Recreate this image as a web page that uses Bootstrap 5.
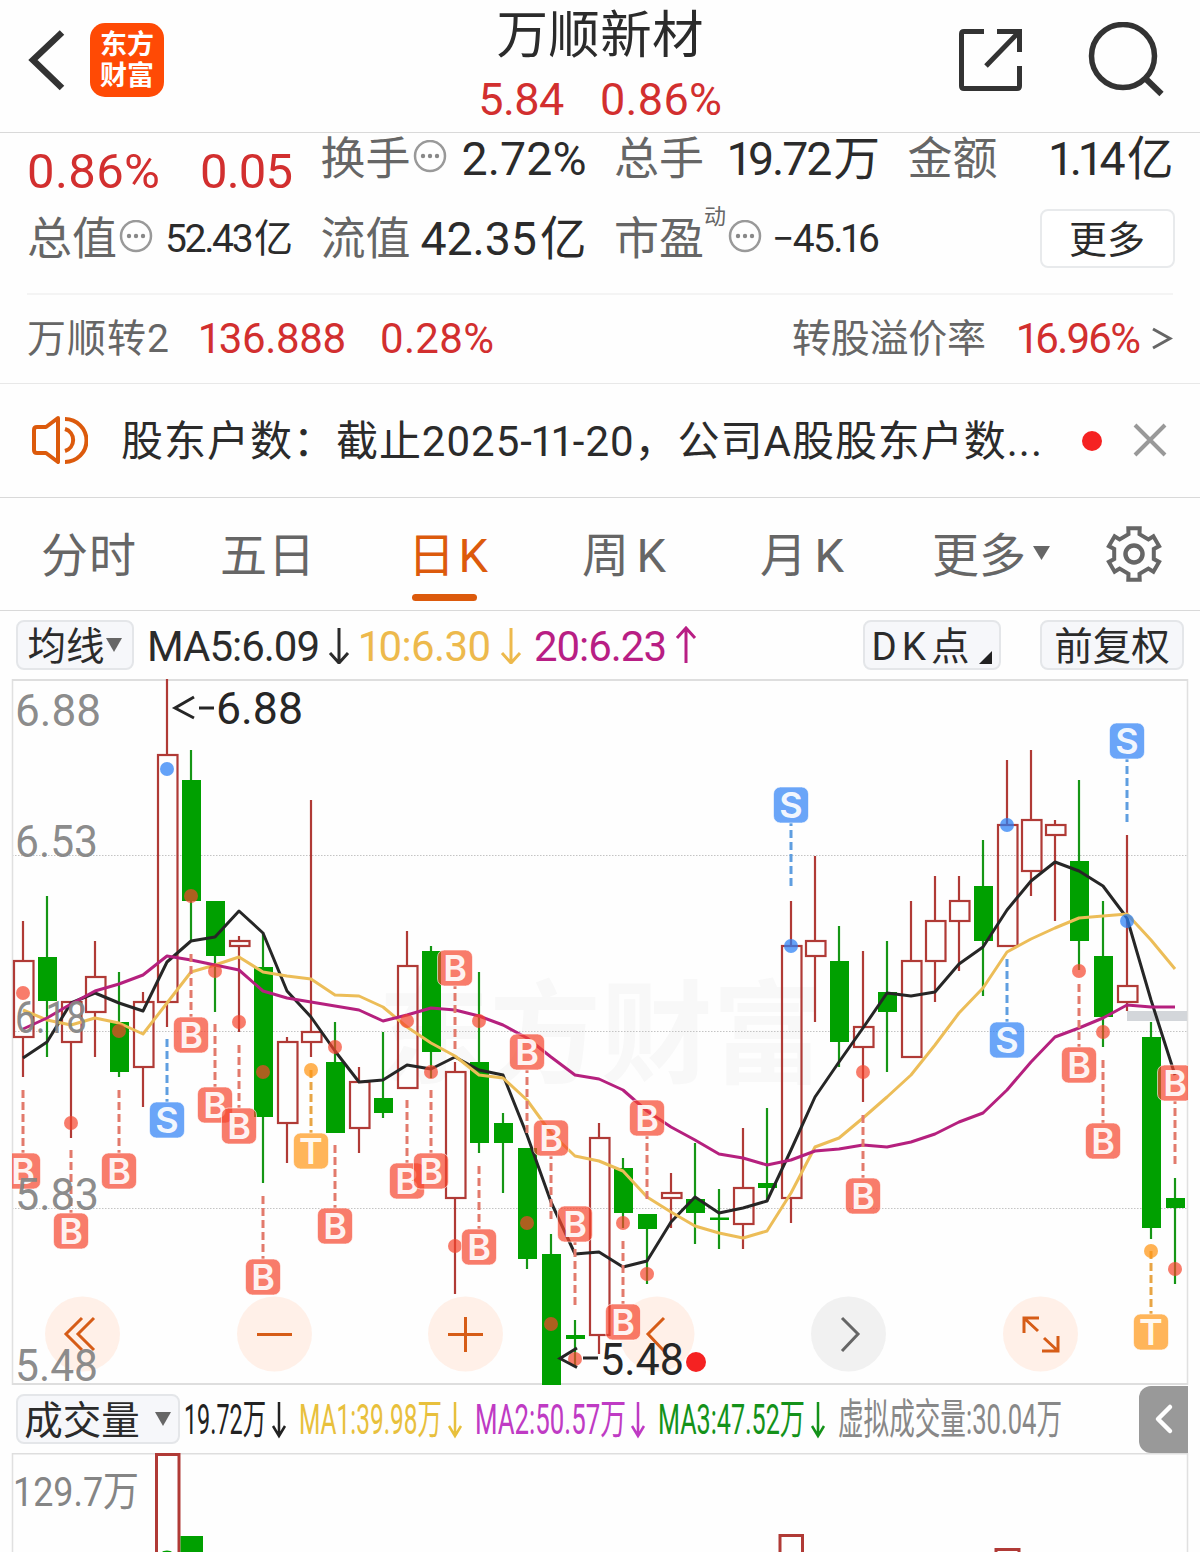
<!DOCTYPE html>
<html lang="zh-CN">
<head>
<meta charset="utf-8">
<meta name="viewport" content="width=device-width, initial-scale=1">
<title>万顺新材 日K</title>
<link rel="stylesheet" href="https://cdn.jsdelivr.net/npm/bootstrap@5.3.0/dist/css/bootstrap.min.css">
<style>
:root{--ink:#2b2b2b;--muted-ink:#666;--up:#d22f2f;--accent:#dc5a0c;--rule:#d9d9d9}
body{font-family:Roboto,"Noto Sans CJK SC",sans-serif;color:var(--ink);background:#fefefe;width:1200px;height:1552px;overflow:hidden;line-height:1}
svg{display:block;flex:none}
.up-ink{color:var(--up)}
.dim{color:var(--muted-ink)}
.fit{display:inline-block;white-space:nowrap;flex:none}
.one{margin:0 -.055em}
.unit{margin-left:.07em}
.top-bar{height:133px;border-bottom:1px solid var(--rule);padding:0 36px 0 26px}
.side-box{width:230px}
.title-box{margin-left:10px}
.app-logo{width:74px;height:74px;border-radius:15px;background:#ff4a05;color:#fff;font-size:27px;line-height:31px;font-weight:700;padding-top:7px;margin-left:24px}
.stock-name{font-size:51.5px;line-height:60px;margin-top:6px}
.stock-quote{font-size:45px;line-height:50px;margin-top:9px;gap:36px}
.stats{display:grid;grid-template-columns:repeat(4,266px);column-gap:27.5px;grid-template-rows:50px 110px;padding:0 27px;height:160px}
.stat-label{font-size:45px;padding-top:2px}
.stat-value{font-size:46.5px;padding-top:2px}
.stat-value-sm{font-size:39px;padding-top:3px}
.big-pct{font-size:49px;padding-top:14px}
.second-row{align-items:center;height:110px}
.tiny-sup{font-size:22px;align-self:flex-start;padding-top:23px}
.more-btn{width:135px;height:59px;border:2px solid #e8eaec;border-radius:8px;background:#fff;font-size:38px;color:var(--ink);padding:3px 0 0;line-height:1;margin-right:-1px}
.bond-row{height:90px;margin:0 27px;border-top:2px solid #f4f4f4;font-size:39px}
.bond-val{font-size:42px}
.bond-price{margin-left:31px}
.bond-rate{margin-left:34px}
.premium{margin-left:32px}
.notice{height:115px;border-top:1px solid #e8e8e8;border-bottom:1px solid var(--rule);font-size:42px;padding:0 31px 0 32px}
.notice-text{margin:3px 40px 0 33px}
.red-dot{width:20px;height:20px;border-radius:50%;background:#f52222}
.k-tabs{display:grid;grid-template-columns:179px 188px 174px 178px 172px 174px 56px;height:113px;border-bottom:1px solid var(--rule);font-size:47px;color:var(--muted-ink);padding-left:41px}
.k-tab{height:112px;display:flex;align-items:center;position:relative}
.k-tab .fit{padding-top:3px}
.k-tab.on{color:var(--accent)}
.k-tab.on::after{content:"";position:absolute;left:4px;bottom:9px;width:65px;height:7px;border-radius:4px;background:var(--accent)}
.ma-bar{height:68px;padding:0 16px;font-size:42px}
.ma-bar>.fit{padding-top:4px}
.chip{height:50px;border:2px solid #e4e6e9;border-radius:8px;background:#f6f7fa;font-size:38.5px;display:flex;align-items:center;justify-content:center;flex:none}
.chip>span{padding-top:4px}
.vol-bar{height:68px;padding-left:16px}
.drawer{width:49px;height:67px;border-radius:12px 0 0 12px;background:#999;margin-right:12px}
svg text{white-space:pre}
</style>
</head>
<body>
<header class="top-bar d-flex justify-content-between">
  <div class="side-box d-flex align-items-center" style="height:120px">
    <svg width="40" height="64" viewBox="26 28 40 64" fill="none" stroke="#333" stroke-width="6.5"><path d="M62 32.500 33 60l29 28"/></svg>
    <div class="app-logo text-center">东方<br>财富</div>
  </div>
  <div class="title-box text-center">
    <div class="stock-name"><span class="fit" data-w="207">万顺新材</span></div>
    <div class="stock-quote d-flex justify-content-center up-ink"><span class="fit" data-w="86">5.84</span><span class="fit" data-w="122">0.86%</span></div>
  </div>
  <div class="side-box d-flex justify-content-end align-items-center" style="height:120px">
    <svg width="206" height="76" viewBox="958 22 206 76" fill="none" stroke="#333" stroke-width="5"><path d="M984 31.500H964q-2.500 0-2.500 2.500V86q0 2.500 2.500 2.500h53q2.500 0 2.500-2.500V66M997 31.500h22.500V52M1019 32 986 66"/><circle cx="1123" cy="56" r="31.500" stroke-width="5.500"/><path d="m1146 79 15.500 15" stroke-width="6"/></svg>
  </div>
</header>

<section class="stats">
  <div class="d-flex justify-content-between up-ink big-pct" style="height:50px"><span class="fit" data-w="133">0.86%</span><span class="fit" data-w="93">0.05</span></div>
  <div class="d-flex align-items-center"><span class="stat-label dim">换手</span><svg class="dots me-auto" width="36" height="36"></svg><span class="fit stat-value" data-w="125">2.72%</span></div>
  <div class="d-flex align-items-center justify-content-between"><span class="stat-label dim">总手</span><span class="fit stat-value" data-w="151">19.72万</span></div>
  <div class="d-flex align-items-center justify-content-between"><span class="stat-label dim">金额</span><span class="fit stat-value" data-w="123">1.14亿</span></div>
  <div class="d-flex second-row"><span class="stat-label dim">总值</span><svg class="dots me-auto" width="36" height="36"></svg><span class="fit stat-value-sm" data-w="128">52.43亿</span></div>
  <div class="d-flex second-row justify-content-between"><span class="stat-label dim">流值</span><span class="fit stat-value" data-w="166">42.35亿</span></div>
  <div class="d-flex second-row"><span class="stat-label dim">市盈</span><span class="tiny-sup dim">动</span><svg class="dots me-auto" width="36" height="36"></svg><span class="fit stat-value-sm" data-w="108">−45.16</span></div>
  <div class="d-flex second-row justify-content-end"><button class="more-btn">更多</button></div>
</section>

<section class="bond-row d-flex align-items-center">
  <span class="fit dim" data-w="142">万顺转2</span>
  <span class="fit up-ink bond-val bond-price" data-w="146">136.888</span>
  <span class="fit up-ink bond-val bond-rate" data-w="114">0.28%</span>
  <span class="fit dim ms-auto" data-w="194">转股溢价率</span>
  <span class="fit up-ink bond-val premium" data-w="123">16.96%</span>
  <svg class="ms-2" width="24" height="28" fill="none" stroke="#666" stroke-width="3"><path d="m4 4 17 9.500L4 23"/></svg>
</section>

<section class="notice d-flex align-items-center">
  <svg width="56" height="50" viewBox="0 1 56 50" fill="none" stroke="#dc5a0c" stroke-width="4" stroke-linejoin="round"><path d="M26 3 14 12H5q-3 0-3 3v20q0 3 3 3h9l12 9ZM33 14a11.500 11.500 0 0 1 0 22M33 4a21 21 0 0 1 0 43"/></svg>
  <span class="fit notice-text" data-w="921">股东户数：截止2025-11-20，公司A股股东户数...</span>
  <span class="red-dot"></span>
  <svg class="ms-auto" width="38" height="38" stroke="#999" stroke-width="4"><path d="m4 3 30 30M34 3 4 33"/></svg>
</section>

<nav class="k-tabs">
  <span class="k-tab"><span class="fit" data-w="95">分时</span></span>
  <span class="k-tab"><span class="fit" data-w="95">五日</span></span>
  <span class="k-tab on"><span class="fit" data-w="80">日K</span></span>
  <span class="k-tab"><span class="fit" data-w="84">周K</span></span>
  <span class="k-tab"><span class="fit" data-w="84">月K</span></span>
  <span class="k-tab"><span class="fit" data-w="94">更多</span><svg width="26" height="20"><path d="M7 2h17l-8.500 14Z" fill="#666"/></svg></span>
  <span class="k-tab"><svg width="56" height="56" viewBox="-28 -28 56 56" fill="none" stroke="#666" stroke-width="4"><path id="gear"/><circle r="8.500" stroke-width="4.500"/></svg></span>
</nav>

<section class="ma-bar d-flex align-items-center">
  <div class="chip" style="width:118px"><span>均线</span><svg width="18" height="16"><path d="M1 1h16L9 15Z" fill="#666"/></svg></div>
  <span class="fit" data-w="173" style="margin-left:13px">MA5:6.09</span>
  <svg width="26" height="38" style="margin-left:5px" fill="none" stroke="#2b2b2b" stroke-width="3"><path d="M14 2v34M5 27l9 10 9-10"/></svg>
  <span class="fit" data-w="131" style="color:#edb94c;margin-left:9px">10:6.30</span>
  <svg width="26" height="38" style="margin-left:9px" fill="none" stroke="#edb94c" stroke-width="3"><path d="M11 2v34M2 27l9 10 9-10"/></svg>
  <span class="fit" data-w="133" style="color:#b81e84;margin-left:8px">20:6.23</span>
  <svg width="26" height="38" style="margin-left:6px" fill="none" stroke="#b81e84" stroke-width="3"><path d="M13 37V3M4 12l9-10 9 10"/></svg>
  <div class="chip ms-auto" style="width:138px"><span class="fit" data-w="98">DK点</span><svg width="15" height="15" class="ms-2 mt-4"><path d="M14 1v13H1Z" fill="#222"/></svg></div>
  <div class="chip" style="width:144px;margin-left:39px"><span>前复权</span></div>
</section>

<svg id="kline" width="1200" height="706" viewBox="0 679 1200 706"></svg>

<section class="vol-bar d-flex align-items-center">
  <div class="chip" style="width:164px"><span>成交量</span><svg width="32" height="16"><path d="M15 1h16l-8 14Z" fill="#666"/></svg></div>
  <svg id="volLegend" width="890" height="60" viewBox="180 1390 890 60"></svg>
  <div class="drawer ms-auto d-flex align-items-center justify-content-center"><svg width="24" height="34" fill="none" stroke="#fff" stroke-width="4.500" stroke-linecap="round" stroke-linejoin="round"><path d="M18 5 6 17l12 12"/></svg></div>
</section>
<svg id="volume" width="1200" height="99" viewBox="0 1453 1200 99"></svg>

<script>
// spread each label's letters over its column width; the digit 1 sits tighter, units sit looser
document.querySelectorAll('.fit').forEach(e=>{
  const n=e.textContent.length;
  e.innerHTML=e.textContent.replace(/1/g,'<span class="one">1</span>').replace(/[万亿]$/,'<span class="unit">$&</span>');
  const w=+e.dataset.w,nat=e.getBoundingClientRect().width,ls=(w-nat)/(n-1);
  e.style.letterSpacing=ls+'px';e.style.width=w+'px';
});
document.querySelectorAll('.dots').forEach(s=>{
  s.innerHTML='<circle cx="19" cy="16" r="15" fill="none" stroke="#999" stroke-width="2.500"/><g fill="#888"><circle cx="12" cy="16" r="2.200"/><circle cx="19" cy="16" r="2.200"/><circle cx="26" cy="16" r="2.200"/></g>';
});
// six-toothed settings wheel
(()=>{let d='';for(let i=0;i<6;i++){const a=i*Math.PI/3-Math.PI/2;
  [[20.5,-.27],[26.3,-.22],[26.3,.22],[20.5,.27]].forEach(([r,o],j)=>{d+=(i||j?'L':'M')+(r*Math.cos(a+o)).toFixed(1)+' '+(r*Math.sin(a+o)).toFixed(1)});}
  document.getElementById('gear').setAttribute('d',d+'Z');})();

const RED='#b03a36',GREEN='#00a000',X=i=>23+24*i;
// direction, high, body top, body bottom, low
const candles=[
['r',921,961,1037,1077],['g',896,957,1001,1057],['r',1001,1002,1042,1138],['r',941,977,1012,1057],['g',972,1022,1072,1077],['r',992,1002,1067,1107],
['r',679,755,1002,1027],['g',750,780,901,940],['g',901,901,956,1012],['r',936,941,946,1032],['g',932,967,1117,1183],['r',1037,1042,1123,1163],
['r',800,1032,1042,1057],['g',1022,1062,1133,1133],['r',1067,1082,1128,1153],['g',1032,1098,1113,1118],['r',931,966,1088,1088],['g',946,951,1052,1078],
['r',1062,1072,1198,1294],['g',972,1062,1143,1153],['g',1113,1123,1143,1193],['g',1148,1148,1259,1269],['g',1234,1254,1385,1385],['g',1320,1335,1339,1367],
['r',1123,1138,1335,1354],['g',1158,1168,1213,1228],['g',1214,1214,1229,1284],['r',1173,1193,1198,1228],['g',1143,1199,1213,1244],['g',1189,1217.5,1220,1249],
['r',1128,1188,1224,1249],['g',1108,1183,1188,1202],['r',901,946,1198,1223],['r',856,941,956,1022],['g',926,961,1042,1067],['r',951,1027,1047,1102],
['g',941,992,1012,1072],['r',901,961,1057,1057],['r',876,921,961,1002],['r',876,901,921,971],['g',840,886,941,996],['r',760,825,946,946],
['r',750,820,871,896],['r',820,825,835,921],['g',780,861,941,970],['g',901,956,1017,1047],['r',835,986,1002,1011],['g',1022,1037,1228,1239],['g',1178,1198,1208,1284]];
const ma5=[1058,1042,1003,993,1003,1011,962,941,937,911,933,991,1017,1051,1082,1080,1065,1069,1057,1070,1075,1135,1202,1254,1252,1267,1261,1222,1197,1213,1208,1201,1150,1097,1062,1028,993,996,992,964,947,910,881,862,871,886,918,1000,1075];
const ma10=[1010,1020,1025,1018,1023,1034,1003,972,965,957,972,976,979,995,996,1007,1027,1043,1056,1075,1078,1100,1133,1156,1161,1171,1197,1212,1226,1233,1238,1231,1193,1147,1138,1118,1097,1075,1045,1013,988,952,939,928,918,916,914,940,969];
const ma20=[1029,1018,1004,991,984,975,956,960,965,970,991,998,1002,1006,1010,1021,1015,1008,1010,1016,1025,1038,1057,1075,1079,1090,1111,1127,1140,1154,1158,1165,1160,1151,1149,1145,1147,1142,1134,1122,1113,1090,1062,1037,1028,1018,1005,1007,1007];
// letter, candle index, label centre, dot centre, side of the candle (1 below, -1 above)
const marks=[['B',0,1171,993,1],['B',2,1231,1123,1],['B',4,1171,1031,1],['S',6,1120,769,1],['B',7,1035,896,1],['B',8,1105,971,1],['B',9,1126,1022,1],['B',10,1277,1072,1],
['T',12,1151,1070,1],['B',13,1226,1047,1],['B',16,1181,1021,1],['B',17,1171,1072,1],['B',18,968,1246,-1],['B',19,1247,1021,1],['B',21,1052,1223,-1],['B',22,1138,1324,-1],
['B',23,1224,1359,-1],['B',25,1322,1223,1],['B',26,1118,1274,-1],['S',32,805,946,-1],['B',35,1196,1072,1],['S',41,1040,825,1],['B',44,1065,971,1],['B',45,1141,1032,1],
['S',46,741,921,-1],['T',47,1332,1251,1],['B',48,1083,1269,-1]];
const tone={B:'#f5442c',S:'#2b7ff5',T:'#ff9514'},dash={B:'#e27a6c',S:'#5f9ee0',T:'#e8a545'};
const t=(x,y,s,w,fill,size,extra='')=>`<text x="${x}" y="${y}" font-size="${size}" fill="${fill}" textLength="${w}" lengthAdjust="spacingAndGlyphs" ${extra}>${s}</text>`;
const line=(a,c)=>`<polyline points="${a.map((y,i)=>X(i)+','+y).join(' ')}" fill="none" stroke="${c}" stroke-width="3" stroke-linejoin="round"/>`;
let s='<defs><clipPath id="plot"><rect x="12" y="679" width="1176" height="706"/></clipPath></defs>';
s+=t(378,1075,'东方财富',446,'#f8f8f8',112,'font-weight="700"');
s+='<g stroke="#c4c4c4" stroke-width="1" stroke-dasharray="1.500 1.500"><path d="M12 855.500H1187M12 1031.500H1187M12 1208.500H1187"/></g>';
s+='<path d="M12.500 679V1385M1187.500 679V1385" stroke="#e0e0e0" stroke-width="1.500"/><path d="M12 680H1188M12 1384H1188" stroke="#dedede" stroke-width="2"/><g clip-path="url(#plot)">';
s+='<rect x="1127" y="1011" width="60" height="10" fill="#d3d6da"/>';
candles.forEach(([k,h,a,b,l],i)=>{const x=X(i);
  if(k==='g')s+=`<path d="M${x} ${h}V${l}" stroke="#159615" stroke-width="2.200"/><rect x="${x-9}" y="${a}" width="19" height="${b-a}" fill="${GREEN}"/>`;
  else s+=`<path d="M${x} ${h}V${a}M${x} ${b}V${l}" stroke="${RED}" stroke-width="2.200"/><rect x="${x-9}" y="${a}" width="19.500" height="${b-a}" fill="none" stroke="${RED}" stroke-width="2.200"/>`;});
s+=line(ma5,'#262626')+line(ma10,'#ecbd58')+line(ma20,'#b5207e');
s+='<g stroke-width="3" fill="none">';
[[82.5,'M82 1318 66 1334l16 16M94 1318l-16 16 16 16'],[274.5,'M257 1334.500h35'],[465.5,'M448 1334.500h35M465.500 1317v35'],[657,'M664 1318 648 1334l16 17'],[848.500,'M842 1318l16 16-16 17'],[1040.500,'M1038 1331 1024 1318M1024 1333V1318h15M1044 1338l14 13M1058 1336v15h-16']].forEach(([x,d],i)=>{
  s+=`<circle cx="${x}" cy="1334" r="37.500" fill="${i==4?'#eee':'#ffede3'}" fill-opacity=".82"/><path d="${d}" stroke="${i==4?'#666':'#d65c17'}"/>`;});
s+='</g>';
marks.forEach(([k,i,y,dot,side])=>{const x=X(i);
  s+=`<path d="M${x} ${y-side*81}V${y-side*18}" stroke="${dash[k]}" stroke-width="3" stroke-dasharray="8 4"/><circle cx="${x}" cy="${dot}" r="7" fill="${tone[k]}" fill-opacity="${k=='B'?.7:.73}"/>`;});
marks.forEach(([k,i,y])=>{const x=X(i);
  s+=`<rect x="${x-17.500}" y="${y-18}" width="35" height="36" rx="7" fill="${tone[k]}" fill-opacity=".7" stroke="#fff" stroke-opacity=".6"/><text x="${x}" y="${y+13}" font-family="Inter,Roboto,sans-serif" font-size="36" font-weight="600" fill="#fff" fill-opacity=".93" text-anchor="middle">${k}</text>`;});
s+='</g>';
[['6.88',726,86],['6.53',857,83],['6.18',1033,72],['5.83',1210,84],['5.48',1381,83]].forEach(([v,y,w])=>s+=t(15,y,v,w,'#858585',45,'fill-opacity=".95"'));
s+='<path d="M194 697 175 708l19 10M199 708h15" stroke="#262626" stroke-width="3" fill="none"/>'+t(216,724,'6.88',87,'#262626',45);
s+='<path d="M577 1348 560 1358.500l17 9M583 1358h15" stroke="#262626" stroke-width="3" fill="none"/>'+t(600,1375,'5.48',84,'#262626',45)+'<circle cx="696" cy="1362" r="10" fill="#f52222"/>';
document.getElementById('kline').innerHTML=s;

let v='';
[['19.72万',184,82,279,'#222'],['MA1:39.98万',299,143,455,'#e8c03c'],['MA2:50.57万',475,151,638,'#bf3bc4'],['MA3:47.52万',658,147,818,'#14921a'],['虚拟成交量:30.04万',838,224,0,'#888']].forEach(([s,x,w,a,c])=>{
  v+=t(x,1435,s,w,c,42);if(a)v+=`<path d="M${a} 1403v34M${a-6} 1427l6 10 6-10" fill="none" stroke="${c}" stroke-width="2.500"/>`;});
document.getElementById('volLegend').innerHTML=v;
document.getElementById('volume').innerHTML='<path d="M12.500 1552V1453M1187.500 1453V1552" stroke="#e0e0e0" stroke-width="1.500"/><path d="M12 1453.500H1188" stroke="#dedede" stroke-width="2"/>'
 +'<g fill="none" stroke="#b03a36" stroke-width="3"><path d="M156.500 1560V1454.500H179V1560M780 1560V1535.500h22.500V1560M996 1560v-10.500h23V1560"/></g><rect x="180.500" y="1536" width="22.500" height="20" fill="#00a000"/><ellipse cx="167" cy="1553" rx="5" ry="2.500" fill="#00a000"/>'
 +t(13,1506,'129.7万',126,'#858585',41);
</script>
<script src="https://cdn.jsdelivr.net/npm/bootstrap@5.3.0/dist/js/bootstrap.bundle.min.js"></script>
</body>
</html>
